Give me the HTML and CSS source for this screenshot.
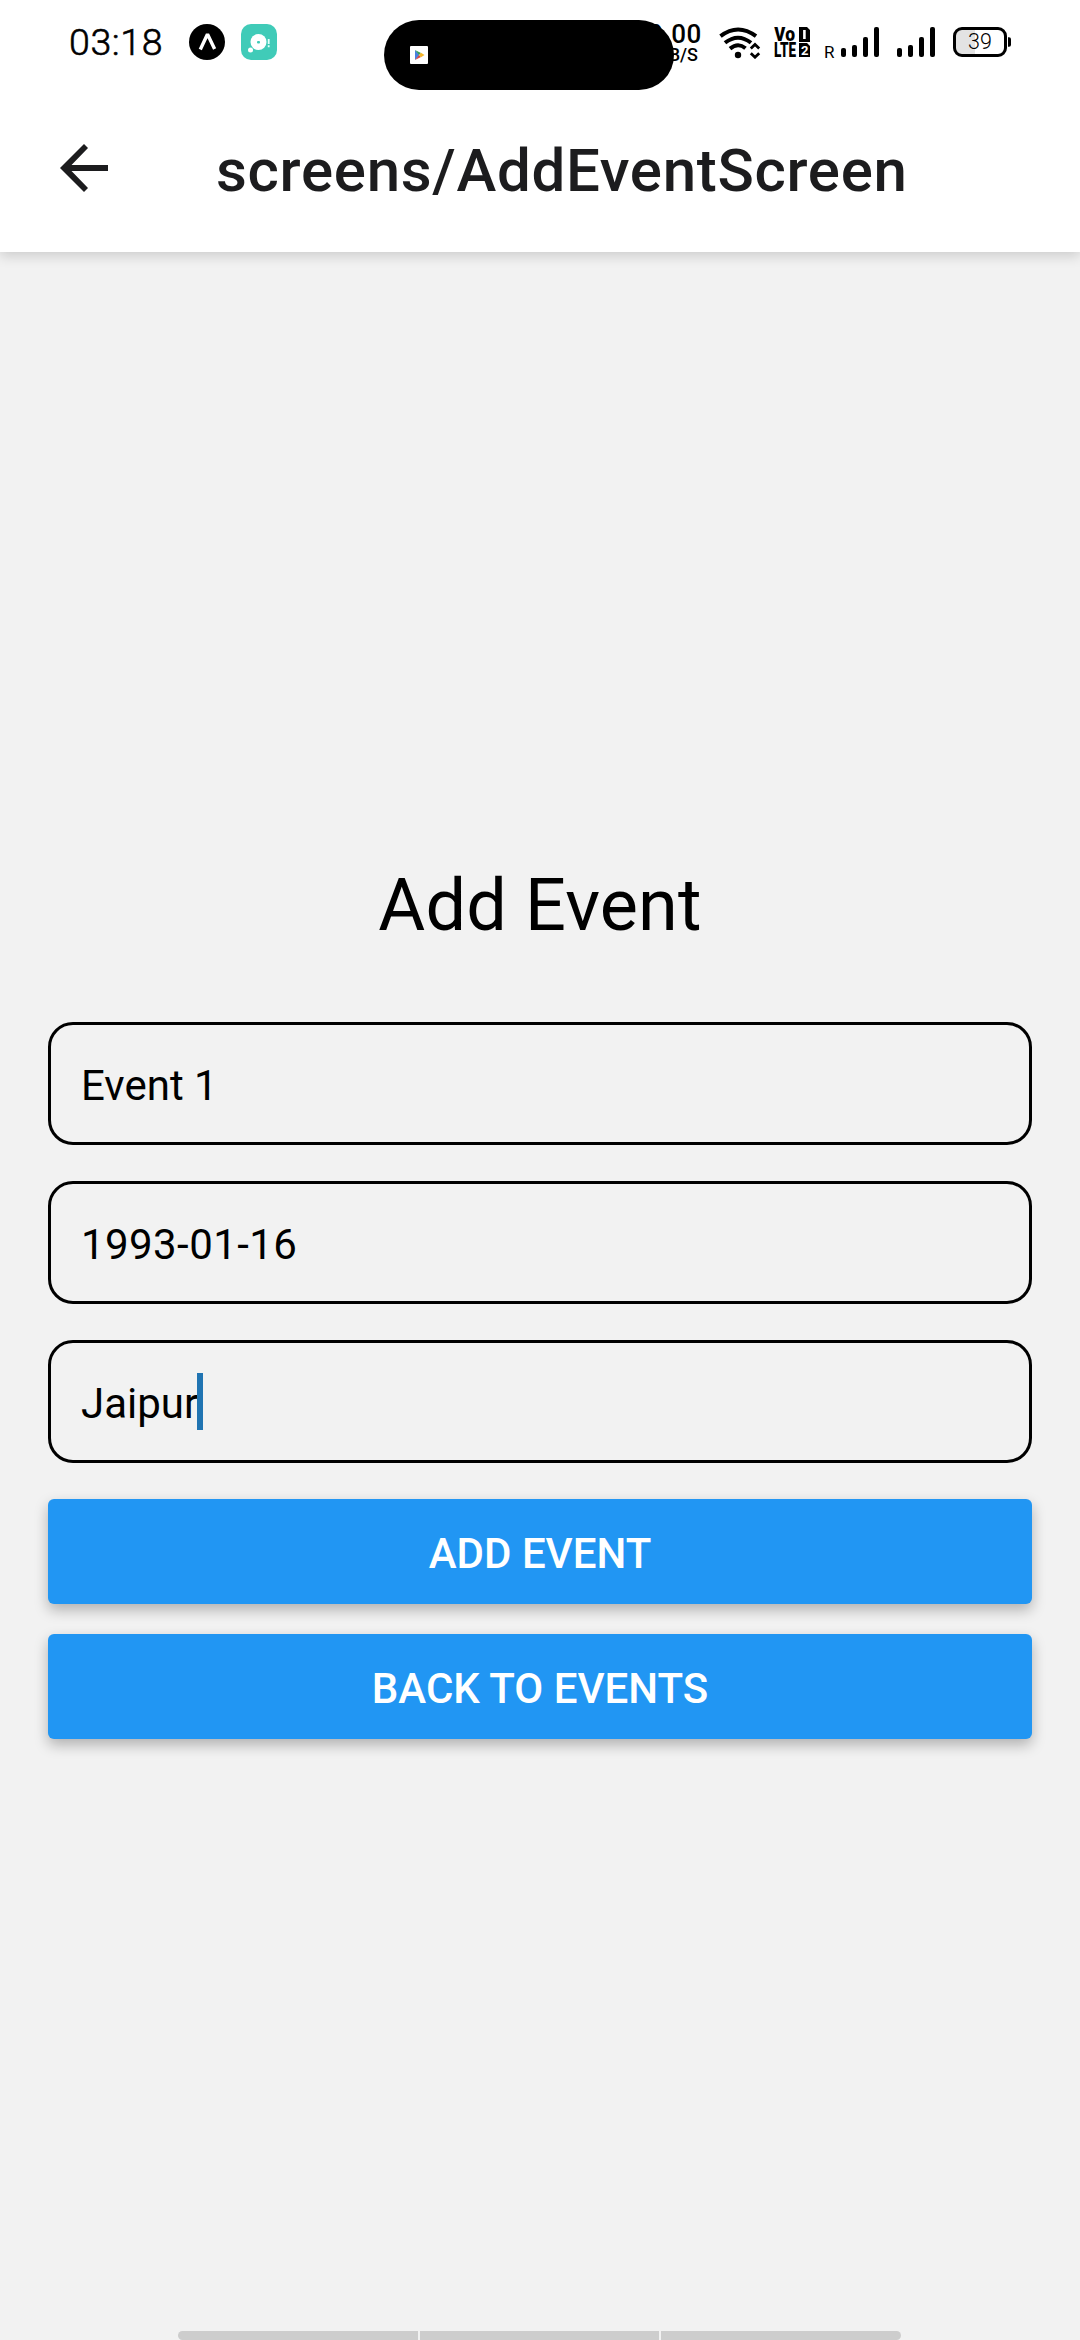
FILE: index.html
```html
<!DOCTYPE html>
<html lang="en">
<head>
<meta charset="utf-8">
<title>Add Event</title>
<link rel="stylesheet" href="styles.css">
</head>
<body>
<div class="screen">
  <header class="top">
    <div class="status">
      <div class="status-left">
        <span class="clock">03:18</span>
        <svg class="app-icon" viewBox="0 0 36 36"><circle cx="18" cy="18" r="18"/><path d="M11.3 25.5 18 11.2h1L25.6 25" fill="none" stroke="#fff" stroke-width="3.4"/></svg>
        <svg class="app-icon" viewBox="0 0 36 36"><rect width="36" height="36" rx="10" fill="#40cbb8"/><circle cx="17.5" cy="18" r="8" fill="#fff"/><circle cx="9.5" cy="26" r="2.5" fill="#fff"/><rect x="16" y="17" width="3" height="2.4" rx="1" fill="#40cbb8"/><path d="M27.7 15v5M27.7 21.3v1.9" stroke="#e4fffb" stroke-width="1.8"/></svg>
      </div>
      <div class="status-right">
        <div class="speed"><span class="speed-value">0.00</span><span class="speed-unit">KB/S</span></div>
        <svg class="wifi" viewBox="0 0 42 32" fill="none" stroke="#000"><path d="M1.5 9.2Q19-4.2 37 9.2" stroke-width="4"/><path d="M6 15.8Q19 5.6 32 15.8" stroke-width="4"/><path d="M11 21.6Q19 15 26.5 21.2" stroke-width="4"/><circle cx="19" cy="28" r="3.2" fill="#000" stroke="none"/><path d="m31.8 21.4 4.2-4 4.2 4M31.8 26.2l4.2 4 4.2-4" stroke-width="2.8"/></svg>
        <svg class="volte" viewBox="0 0 36 31"><text x="0" y="14.4" textLength="21" lengthAdjust="spacingAndGlyphs" class="volte-text">Vo</text><text x="0" y="30" textLength="22" lengthAdjust="spacingAndGlyphs" class="volte-text">LTE</text><path d="M25 0h8l3 3v12H25zM25 16h8l3 3v11H25z"/><path d="M30.4 3v9" stroke="#fff" stroke-width="2.6"/><text x="27" y="27.8" class="sim-text">2</text></svg>
        <div class="network"><span class="roaming">R</span>
        <svg class="bars" viewBox="0 0 38 30"><rect y="21" width="5" height="9" rx="2"/><rect x="11" y="18" width="5" height="12" rx="2"/><rect x="22" y="10" width="5" height="20" rx="2"/><rect x="33" width="5" height="30" rx="2"/></svg></div>
        <svg class="bars bars-second" viewBox="0 0 38 30"><rect y="21" width="5" height="9" rx="2"/><rect x="11" y="18" width="5" height="12" rx="2"/><rect x="22" y="10" width="5" height="20" rx="2"/><rect x="33" width="5" height="30" rx="2"/></svg>
        <svg class="battery" viewBox="0 0 58 30"><path d="M22 1.5H9A7.5 7.5 0 0 0 1.5 9v12A7.5 7.5 0 0 0 9 28.5h13z" fill="#e3e3e3"/><rect x="1.5" y="1.5" width="51" height="27" rx="7.5" fill="none" stroke="#000" stroke-width="3"/><path d="M55 10.2h1q2 0 2 2v5.6q0 2-2 2h-1z"/><text x="27" y="22.3" text-anchor="middle" class="battery-text">39</text></svg>
      </div>
      <div class="island"><svg class="play" viewBox="0 0 18 18"><rect width="18" height="18" rx="1" fill="#fff"/><path d="M5 4v10l4.5-5z" fill="#4a7fe0"/><path d="m5 4 6 3-2 2z" fill="#38a05a"/><path d="m5 14 6-3-2-2z" fill="#d94a45"/><path d="m11 6.700 3.500 2.300-3.500 2.300L9 9z" fill="#f5b62b"/></svg></div>
    </div>
    <div class="nav">
      <svg class="back" viewBox="0 0 48 48"><path d="M48 21H11.500L28 4l-4-4L0 24l24 24 4-4-16.500-17H48z" fill="#1c1c1e"/></svg>
      <h1 class="nav-title">screens/AddEventScreen</h1>
    </div>
  </header>
  <main class="content">
    <h2 class="heading">Add Event</h2>
    <div class="field">Event 1</div>
    <div class="field field-date">1993-01-16</div>
    <div class="field">Jaipur<span class="caret"></span></div>
    <button class="button">ADD EVENT</button>
    <button class="button">BACK TO EVENTS</button>
  </main>
  <footer class="gesture"><span></span><span></span><span></span></footer>
</div>
</body>
</html>
```
FILE: styles.css
```css
* { box-sizing: border-box; }
body { margin: 0; font-family: Roboto, sans-serif; color: #000; }
svg { display: block; flex: none; }
.screen { width: 1080px; height: 2340px; display: flex; flex-direction: column; background: #f2f2f2; overflow: hidden; }
.top { flex: none; height: 252px; background: #fff; box-shadow: 0 4px 12px rgba(0, 0, 0, .16); }
.status { position: relative; height: 84px; display: flex; justify-content: space-between; padding: 0 69px 0 69px; }
.status-left { display: flex; align-items: center; }
.clock { width: 120px; font-size: 37.500px; line-height: 84px; letter-spacing: .6px; font-weight: 300; -webkit-text-stroke: .6px #000; }
.app-icon { width: 36px; height: 36px; }
.app-icon + .app-icon { margin-left: 16px; }
.status-right { display: flex; align-items: flex-start; padding-top: 27px; }
.speed { display: flex; flex-direction: column; align-items: flex-end; margin: -5px 17px 0 0; font-weight: 500; }
.speed-value { font-size: 26px; line-height: 24px; letter-spacing: .6px; }
.speed-unit { margin-right: 4px; font-size: 18px; line-height: 18px; }
.wifi { width: 42px; height: 32px; }
.volte { width: 36px; height: 31px; margin-left: 13px; }
.volte-text { font: 900 20px Roboto, sans-serif; }
.sim-text { font: 700 13px Roboto, sans-serif; fill: #fff; }
.network { display: flex; align-items: flex-end; width: 64px; height: 30px; margin-left: 14px; }
.roaming { width: 17px; font-size: 17px; line-height: 20px; margin-bottom: -5px; }
.bars { width: 38px; height: 30px; }
.bars-second { margin-left: 9px; }
.battery { width: 58px; height: 30px; margin-left: 18px; }
.battery-text { font: 300 21.500px Roboto, sans-serif; }
.island { position: absolute; left: 384px; top: 20px; width: 290px; height: 70px; border-radius: 35px; background: #000; padding: 26px; }
.play { width: 18px; height: 18px; }
.nav { height: 168px; display: flex; align-items: center; padding-left: 60px; }
.back { width: 48px; height: 48px; }
.nav-title { margin: 6px 0 0 108px; font-size: 60px; line-height: 70px; font-weight: 500; letter-spacing: .7px; color: #1c1c1e; white-space: nowrap; }
.content { flex: 1; display: flex; flex-direction: column; padding: 612px 48px 0; }
.heading { margin: 0 0 74px; font-size: 72px; line-height: 84px; font-weight: 400; letter-spacing: .15px; text-align: center; }
.field { display: flex; align-items: center; height: 123px; margin-bottom: 36px; padding: 4px 30px 0 30px; border: 3px solid #000; border-radius: 25px; font-size: 42px; line-height: 50px; }
.field-date { letter-spacing: .42px; }
.caret { width: 6px; height: 57px; margin: -4px 0 0 -1px; background: #2074b2; }
.button { height: 105px; margin: 0 0 30px; padding: 3px 0 0; border: 0; border-radius: 6px; background: #2196f3; color: #fff; font: 500 42px Roboto, sans-serif; text-align: center; box-shadow: 0 6px 14px rgba(0, 0, 0, .27); }
.gesture { display: flex; gap: 2px; width: 723px; height: 9px; margin-left: 178px; border-radius: 5px; overflow: hidden; }
.gesture span { flex: 1; background: #cdcdcd; }
```
